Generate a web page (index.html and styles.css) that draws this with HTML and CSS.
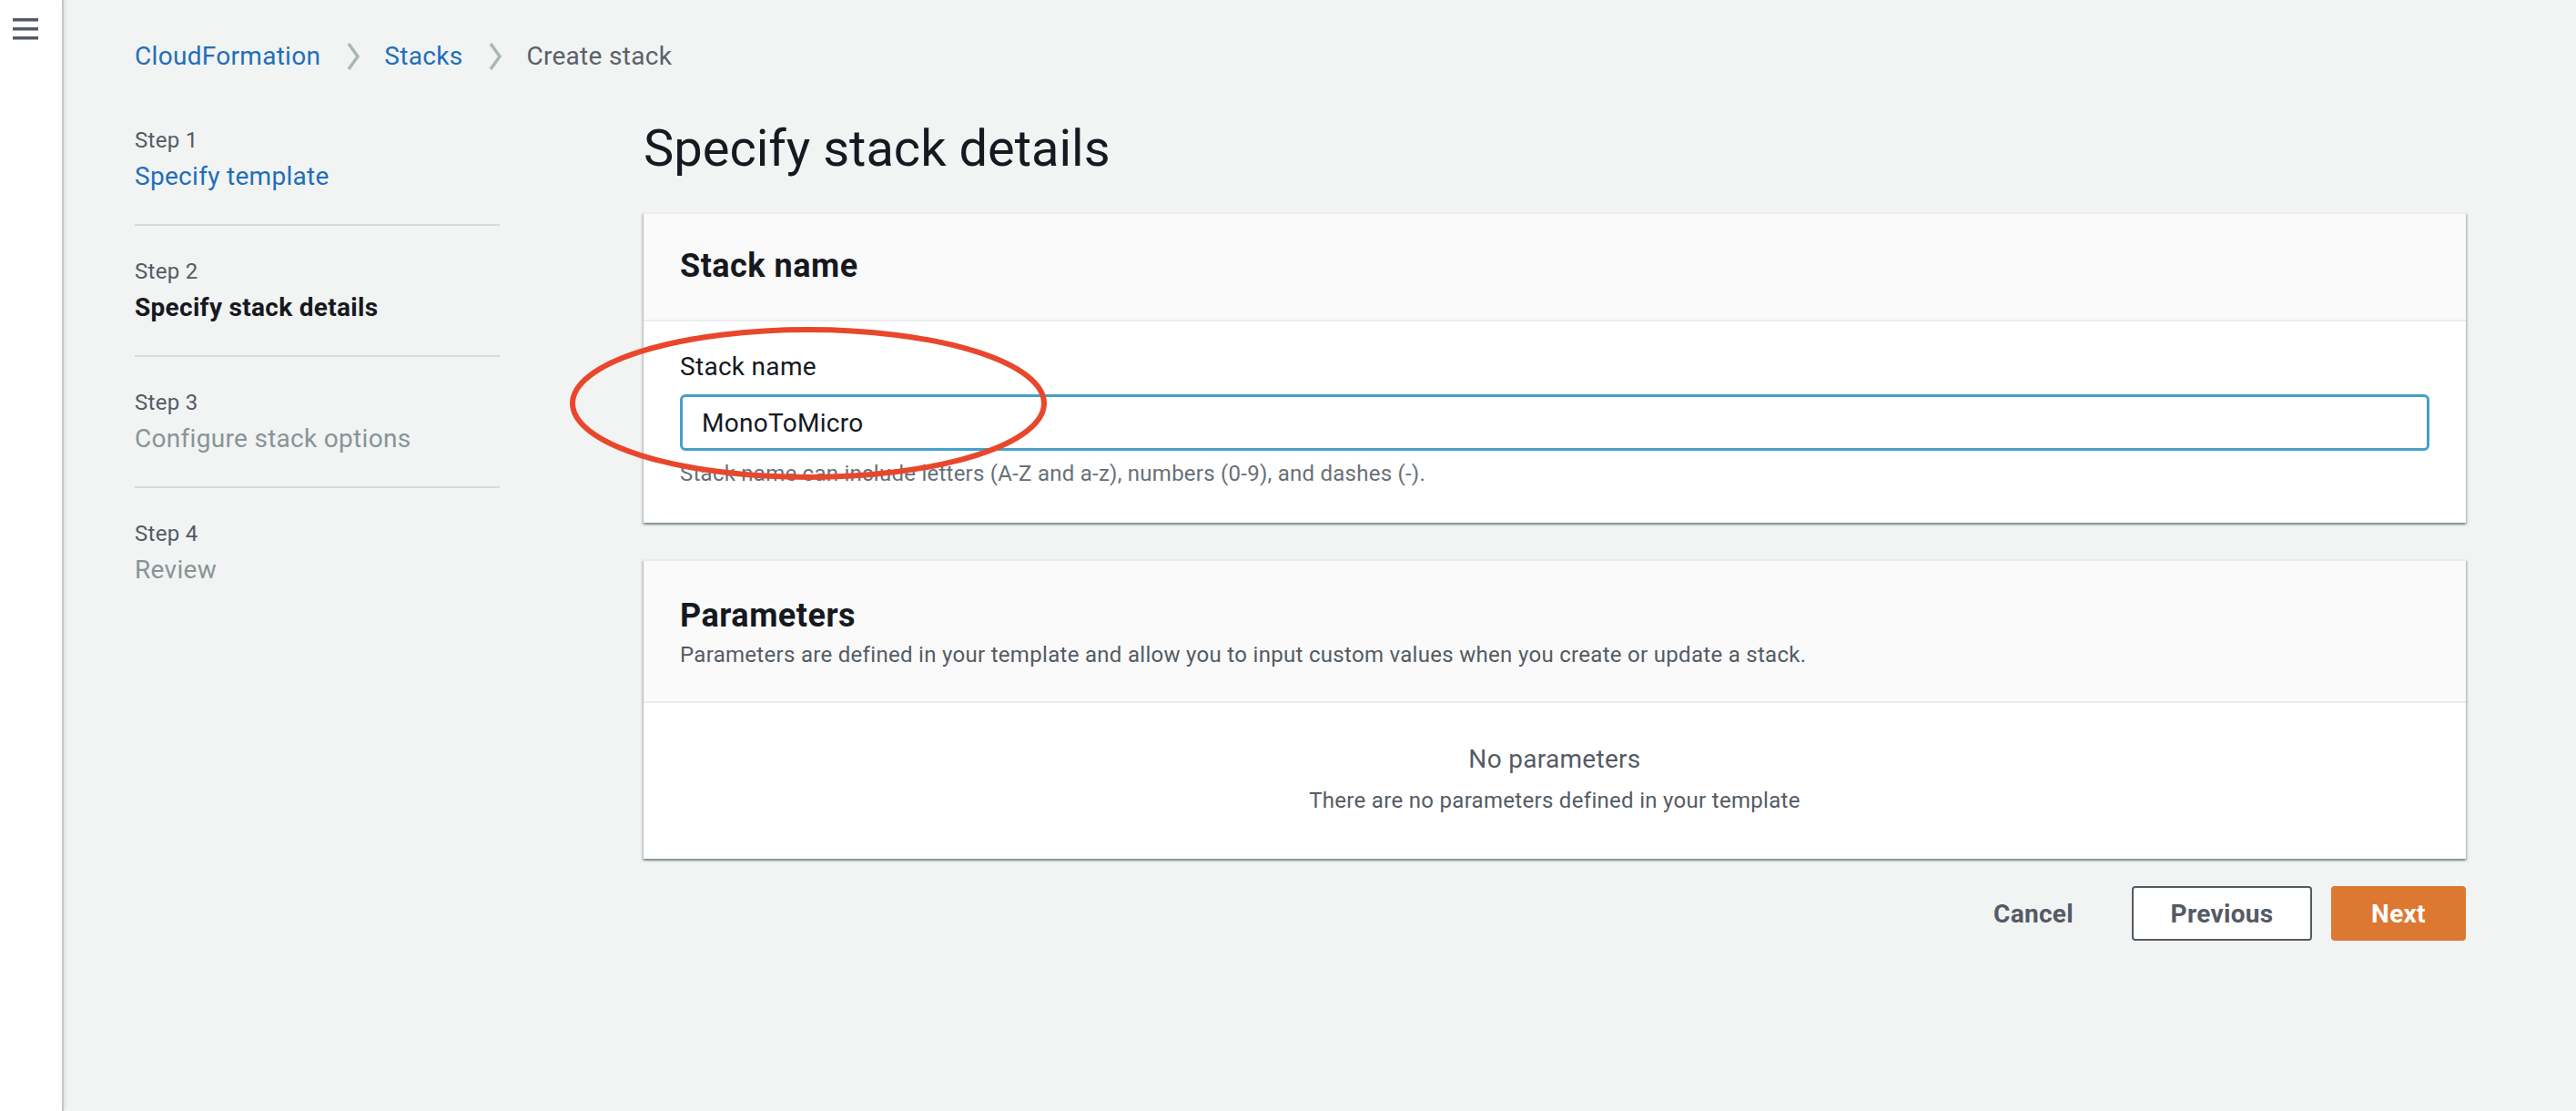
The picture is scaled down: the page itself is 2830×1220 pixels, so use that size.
FILE: index.html
```html
<!DOCTYPE html>
<html lang="en">
<head>
<meta charset="utf-8">
<title>Create stack - CloudFormation</title>
<link rel="stylesheet" href="styles.css">
</head>
<body>
<div class="app">
  <aside class="rail">
    <button class="hamburger" aria-label="Open navigation">
      <svg width="28" height="25" viewBox="0 0 28 25"><rect x="0" y="0" width="28" height="3.5" fill="#545b64"/><rect x="0" y="10" width="28" height="3.5" fill="#545b64"/><rect x="0" y="20" width="28" height="3.5" fill="#545b64"/></svg>
    </button>
  </aside>
  <main class="main">
    <nav class="breadcrumbs">
      <a class="crumb-link" href="#">CloudFormation</a>
      <svg class="chev" width="16" height="32" viewBox="0 0 16 32"><path d="M3 2 L13 16 L3 30" fill="none" stroke="#aab7b8" stroke-width="3.5"/></svg>
      <a class="crumb-link" href="#">Stacks</a>
      <svg class="chev" width="16" height="32" viewBox="0 0 16 32"><path d="M3 2 L13 16 L3 30" fill="none" stroke="#aab7b8" stroke-width="3.5"/></svg>
      <span class="crumb-current">Create stack</span>
    </nav>
    <div class="layout">
      <ol class="steps">
        <li class="step">
          <div class="step-label">Step 1</div>
          <a class="step-title step-link" href="#">Specify template</a>
        </li>
        <li class="step">
          <div class="step-label">Step 2</div>
          <div class="step-title step-active">Specify stack details</div>
        </li>
        <li class="step">
          <div class="step-label">Step 3</div>
          <div class="step-title step-disabled">Configure stack options</div>
        </li>
        <li class="step step-last">
          <div class="step-label">Step 4</div>
          <div class="step-title step-disabled">Review</div>
        </li>
      </ol>
      <div class="content">
        <h1 class="page-title">Specify stack details</h1>
        <section class="card">
          <header class="card-header">
            <h2 class="card-title">Stack name</h2>
          </header>
          <div class="card-body">
            <div class="field">
              <label class="field-label" for="stackName">Stack name</label>
              <input class="field-input" id="stackName" type="text" value="MonoToMicro">
              <div class="field-hint">Stack name can include letters (A-Z and a-z), numbers (0-9), and dashes (-).</div>
              <svg class="annotation" width="540" height="180" viewBox="0 0 540 180"><ellipse cx="270" cy="90" rx="259" ry="81" fill="none" stroke="#e8472c" stroke-width="6"/></svg>
            </div>
          </div>
        </section>
        <section class="card card-params">
          <header class="card-header card-header-desc">
            <h2 class="card-title">Parameters</h2>
            <p class="card-desc">Parameters are defined in your template and allow you to input custom values when you create or update a stack.</p>
          </header>
          <div class="card-body empty">
            <div class="empty-title">No parameters</div>
            <div class="empty-text">There are no parameters defined in your template</div>
          </div>
        </section>
        <div class="actions">
          <button class="btn btn-link">Cancel</button>
          <button class="btn btn-normal">Previous</button>
          <button class="btn btn-primary">Next</button>
        </div>
      </div>
    </div>
  </main>
</div>
</body>
</html>
```

FILE: styles.css
```css
* { box-sizing: border-box; }
html, body { margin: 0; padding: 0; }
body {
  background: #f2f3f3;
  font-family: Roboto, "Open Sans", "Liberation Sans", sans-serif;
  color: #16191f;
  min-height: 1220px;
  letter-spacing: 0.3px;
}
.app {
  display: flex;
  min-height: 1220px;
}
.rail {
  width: 70px;
  flex: 0 0 70px;
  background: #ffffff;
  border-right: 2px solid #c4c7c7;
  box-shadow: 2px 0 4px rgba(0, 28, 36, 0.08);
}
.hamburger {
  display: block;
  margin: 20px 0 0 14px;
  padding: 0;
  border: 0;
  background: transparent;
  line-height: 0;
}
.main {
  flex: 1;
  padding: 0 121px 0 78px;
}
.breadcrumbs {
  display: flex;
  align-items: center;
  padding-top: 42px;
  height: 82px;
  font-size: 28px;
  line-height: 40px;
}
.crumb-link { color: #1e6fba; text-decoration: none; }
.crumb-current { color: #5a6169; }
.chev { margin: 0 26px 0 28px; }
.layout {
  display: grid;
  grid-template-columns: 401px 1fr;
  column-gap: 158px;
  margin-top: 49px;
}
.steps {
  list-style: none;
  margin: 0;
  padding: 0;
}
.step {
  padding: 34px 0 32px;
  border-bottom: 2px solid #d5dbdb;
}
.step:first-child { padding-top: 7px; }
.step-last { border-bottom: 0; }
.step-label {
  font-size: 24px;
  line-height: 32px;
  color: #545b64;
  margin-bottom: 4px;
}
.step-title {
  display: block;
  font-size: 28px;
  line-height: 40px;
}
.step-link { color: #1e6fba; text-decoration: none; }
.step-active { font-weight: 700; color: #16191f; }
.step-disabled { color: #879596; }
.content { min-width: 0; }
.page-title {
  margin: 0;
  font-size: 56px;
  line-height: 64px;
  font-weight: 400;
  letter-spacing: 0;
  color: #16191f;
}
.card {
  margin-top: 38px;
  background: #ffffff;
  border-top: 2px solid #eaeded;
  box-shadow: 0 2px 2px 0 rgba(0, 28, 36, 0.3), 2px 2px 2px 0 rgba(0, 28, 36, 0.15), -2px 2px 2px 0 rgba(0, 28, 36, 0.15);
}
.card-params { margin-top: 40px; }
.card-header {
  background: #fafafa;
  border-bottom: 2px solid #eaeded;
  padding: 36px 40px 38px;
}
.card-header-desc { padding: 39px 40px 33px; }
.card-title {
  margin: 0;
  font-size: 36px;
  line-height: 42px;
  font-weight: 700;
  letter-spacing: 0.5px;
  color: #16191f;
}
.card-desc {
  margin: 4px 0 0;
  font-size: 24px;
  line-height: 36px;
  color: #545b64;
}
.card-body { padding: 30px 40px 36px; }
.field { position: relative; }
.field-label {
  display: block;
  font-size: 28px;
  line-height: 40px;
  color: #16191f;
  margin-bottom: 10px;
}
.field-input {
  display: block;
  width: 100%;
  height: 62px;
  border: 3px solid #44a0c8;
  border-radius: 6px;
  padding: 0 21px;
  font-family: inherit;
  font-size: 28px;
  letter-spacing: 0.3px;
  color: #16191f;
  background: #ffffff;
  outline: none;
}
.field-hint {
  margin-top: 7px;
  font-size: 24px;
  line-height: 36px;
  letter-spacing: 0.25px;
  color: #687078;
}
.annotation {
  position: absolute;
  left: -129px;
  top: -30px;
  pointer-events: none;
}
.empty {
  padding: 42px 40px 46px;
  text-align: center;
}
.empty-title {
  font-size: 28px;
  line-height: 40px;
  color: #545b64;
}
.empty-text {
  margin-top: 7px;
  font-size: 24px;
  line-height: 36px;
  color: #545b64;
}
.actions {
  display: flex;
  justify-content: flex-end;
  align-items: center;
  margin-top: 30px;
}
.btn {
  height: 60px;
  font-family: inherit;
  font-size: 28px;
  font-weight: 700;
  letter-spacing: 0.3px;
  border-radius: 4px;
  cursor: pointer;
}
.btn-link {
  border: 0;
  background: transparent;
  color: #545b64;
  padding: 0;
  margin-right: 64px;
}
.btn-normal {
  width: 198px;
  border: 2px solid #545b64;
  background: #ffffff;
  color: #545b64;
  margin-right: 21px;
}
.btn-primary {
  width: 148px;
  border: 0;
  background: #dd7832;
  color: #ffffff;
}
```
